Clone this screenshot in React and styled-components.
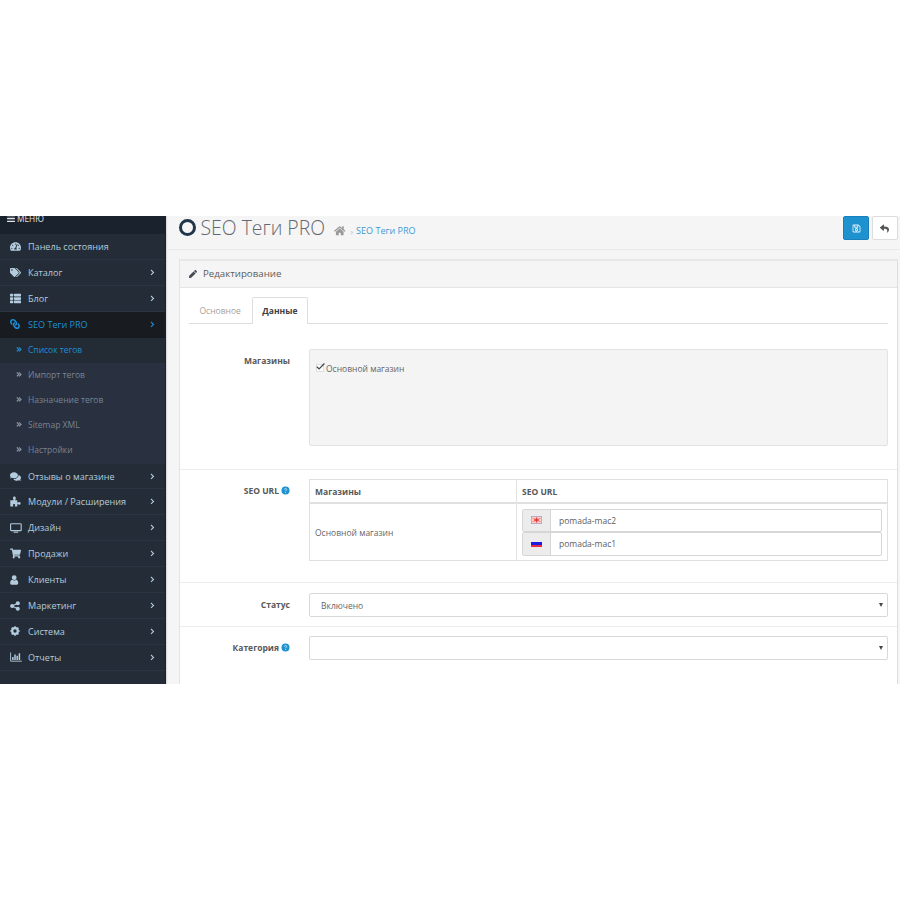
import React, {useState} from 'react';
import styled, {createGlobalStyle, css} from 'styled-components';
import {
    FaTachometerAlt, FaTags, FaThList, FaLink, FaComments, FaShoppingCart,
    FaBars, FaHome, FaPen, FaRegSave, FaReply
} from 'react-icons/fa';

const PuzzleIcon = ()=>(
    <svg width='11' height='11' viewBox='0 0 11 11' fill='currentColor'>
        <path d='M.3 4.300h2.900c.4 0 .4-.4.2-.9C3.100 2.900 3 2.500 3 2 3 1.100 3.600.5 4.400.5S5.800 1.100 5.800 2c0 .5-.2.9-.4 1.400-.2.500-.2.9.3.9h1.600v1.900c0 .4.400.5.8.3.400-.2.7-.4 1.200-.4.8 0 1.300.6 1.300 1.300s-.5 1.300-1.300 1.300c-.5 0-.8-.2-1.200-.4-.4-.2-.8-.1-.8.3v1.900H5.200c-.5 0-.5-.4-.3-.8.2-.3.200-.500.200-.8 0-.6-.4-1-1-1s-1.100.4-1.100 1c0 .3.1.5.3.8.2.4.1.8-.3.8H.3z'/>
    </svg>
)

const TvIcon = ()=>(
    <svg width='12' height='10' viewBox='0 0 12 10' fill='none' stroke='currentColor'>
        <rect x='.6' y='.8' width='10.600' height='6.800' rx='.7' strokeWidth='1.100'/>
        <path d='M3.600 9.200h4.600' strokeWidth='1.100'/>
    </svg>
)

const UserIcon = ()=>(
    <svg width='9' height='10' viewBox='0 0 9 10' fill='currentColor'>
        <circle cx='4.200' cy='2.700' r='2.400'/>
        <path d='M2.100 4.700c1.300 1 2.900 1 4.200 0 1.500.4 1.900 1.900 1.900 3.600 0 .9-.5 1.400-1.400 1.400H1.600C.7 9.700.2 9.200.2 8.300c0-1.700.4-3.200 1.900-3.600z'/>
    </svg>
)

const ShareIcon = ()=>(
    <svg width='10' height='10' viewBox='0 0 10 10' fill='currentColor'>
        <circle cx='2.100' cy='5' r='2'/>
        <circle cx='7.800' cy='2.200' r='2'/>
        <circle cx='7.800' cy='7.800' r='2'/>
        <path d='M7.800 2.200L2.100 5l5.700 2.800' fill='none' stroke='currentColor' strokeWidth='1.200'/>
    </svg>
)

const CogIcon = ()=>(
    <svg width='10' height='10' viewBox='0 0 10 10' fill='none' stroke='currentColor'>
        <circle cx='5' cy='5' r='2.800' strokeWidth='2.200'/>
        <path d='M5 .3v1.400M5 8.300v1.400M.3 5h1.400M8.300 5h1.400M1.700 1.700l1 1M7.300 7.300l1 1M1.700 8.300l1-1M7.300 2.700l1-1' strokeWidth='1.700'/>
    </svg>
)

const ChartIcon = ()=>(
    <svg width='12' height='10' viewBox='0 0 12 10' fill='none' stroke='currentColor'>
        <path d='M.6.5v8.700h11.200' strokeWidth='.9'/>
        <path d='M2.900 8V5M5 8V2.600M7.200 8V3.800M9.400 8V1.300' strokeWidth='1.500'/>
    </svg>
)

const HelpIcon = ()=>(
    <svg width='9' height='9' viewBox='0 0 9 9' fill='none'>
        <circle cx='4.500' cy='4.500' r='4' fill='currentColor'/>
        <path d='M3.300 3.500c.1-1.300 2.400-1.200 2.400.1 0 .8-1.200.8-1.200 1.600M4.500 5.900v.9' stroke='#d9eefa' strokeWidth='.9'/>
    </svg>
)

const Angle = ()=>(
    <svg width='5' height='7' viewBox='0 0 5 7' fill='none' stroke='currentColor' strokeWidth='1.100'>
        <path d='M1 1l2.500 2.400L1 5.800'/>
    </svg>
)

const DoubleAngle = ()=>(
    <svg width='6' height='7' viewBox='0 0 6 7' fill='none' stroke='currentColor' strokeWidth='1.200'>
        <path d='M.8 1.400l2 2-2 2M3 1.400l2 2-2 2'/>
    </svg>
)

const Check = ()=>(
    <svg width='11' height='10' viewBox='0 0 11 10' fill='none' stroke='#4a4a4a' strokeWidth='1.300'>
        <path d='M1.800 4.700l2.300 2.200L9.400 1.500'/>
    </svg>
)

const FlagGeorgia = ()=>(
    <svg width='11' height='8' viewBox='0 0 11 8'>
        <rect width='11' height='8' fill='#a9a3bd'/>
        <rect x='.8' y='.8' width='9.400' height='6.400' fill='#fbdcdc'/>
        <path d='M5.500 1.500v5M2.800 4h5.400' stroke='#f0352f' strokeWidth='1.600'/>
        <path d='M1.500 2.300h2M7.500 2.300h2M1.500 5.700h2M7.500 5.700h2' stroke='#f07a78' strokeWidth='1'/>
    </svg>
)

const FlagRussia = ()=>(
    <svg width='11' height='8' viewBox='0 0 11 8'>
        <rect width='11' height='8' fill='#e9e9ee'/>
        <rect y='2' width='11' height='3' fill='#1c1ce0'/>
        <rect y='5' width='11' height='2' fill='#e82a40'/>
    </svg>
)

const topMenu = [
    {name:'Панель состояния', icon:<FaTachometerAlt/>, flat:true},
    {name:'Каталог', icon:<FaTags/>},
    {name:'Блог', icon:<FaThList/>},
    {name:'SEO Теги PRO', icon:<FaLink/>, active:true},
]
const subMenu = ['Список тегов', 'Импорт тегов', 'Назначение тегов', 'Sitemap XML', 'Настройки']
const bottomMenu = [
    {name:'Отзывы о магазине', icon:<FaComments/>},
    {name:'Модули / Расширения', icon:<PuzzleIcon/>},
    {name:'Дизайн', icon:<TvIcon/>},
    {name:'Продажи', icon:<FaShoppingCart/>},
    {name:'Клиенты', icon:<UserIcon/>},
    {name:'Маркетинг', icon:<ShareIcon/>},
    {name:'Система', icon:<CogIcon/>},
    {name:'Отчеты', icon:<ChartIcon/>},
]

const MenuRow = ({item})=>(
    <MenuItem $active={item.active}>
        <span className='icon'>{item.icon}</span>
        <span className='name'>{item.name}</span>
        {!item.flat && <Angle/>}
    </MenuItem>
)

const Sidebar = ()=>(
    <WrapperSidebar>
        <MenuTitle><FaBars/><span>МЕНЮ</span></MenuTitle>
        {topMenu.map(item => <MenuRow key={item.name} item={item}/>)}
        {subMenu.map((name, i) => (
            <SubItem key={name} $active={i === 0}><DoubleAngle/><span>{name}</span></SubItem>
        ))}
        {bottomMenu.map(item => <MenuRow key={item.name} item={item}/>)}
    </WrapperSidebar>
)

const App = ()=>{
    const [checked, setChecked] = useState(true)

    return(
        <>
        <GlobalStyle/>
        <Screen>
            <Sidebar/>
            <Content>
                <PageHeader>
                    <Ring/>
                    <h1>SEO Теги PRO</h1>
                    <Breadcrumb>
                        <FaHome/><i>›</i><a>SEO Теги PRO</a>
                    </Breadcrumb>
                    <Actions>
                        <Button $primary><FaRegSave/></Button>
                        <Button><FaReply/></Button>
                    </Actions>
                </PageHeader>
                <Panel>
                    <PanelHeading><FaPen/><span>Редактирование</span></PanelHeading>
                    <Tabs>
                        <Tab>Основное</Tab>
                        <Tab $active>Данные</Tab>
                    </Tabs>
                    <FormRow $height={145} $gap={25}>
                        <Label><span>Магазины</span></Label>
                        <Well>
                            <CheckLine onClick={()=>setChecked(!checked)}>
                                <CheckBox>{checked && <Check/>}</CheckBox>
                                <span>Основной магазин</span>
                            </CheckLine>
                        </Well>
                    </FormRow>
                    <FormRow $height={113} $gap={9} $line>
                        <Label><span>SEO URL</span><HelpIcon/></Label>
                        <Table>
                            <Th>Магазины</Th>
                            <Th>SEO URL</Th>
                            <Td>Основной магазин</Td>
                            <Td>
                                <InputGroup><div><FlagGeorgia/></div><p>pomada-mac2</p></InputGroup>
                                <InputGroup><div><FlagRussia/></div><p>pomada-mac1</p></InputGroup>
                            </Td>
                        </Table>
                    </FormRow>
                    <FormRow $height={44} $gap={10} $line>
                        <Label><span>Статус</span></Label>
                        <Select><span>Включено</span><Caret/></Select>
                    </FormRow>
                    <FormRow $height={80} $gap={9} $line>
                        <Label><span>Категория</span><HelpIcon/></Label>
                        <Select><span/><Caret/></Select>
                    </FormRow>
                </Panel>
            </Content>
        </Screen>
        </>
    )
}

const GlobalStyle = createGlobalStyle`
   *{ box-sizing: border-box; }
   body{
       margin: 0;
       background: #fff;
       font-family: 'Open Sans', sans-serif;
       font-size: 8.5px;
       color: #666;
   }
   p, h1{ margin: 0; }
   svg{ display: block; flex: none; }
`;

const Screen = styled.div`
   display: flex;
   width: 900px;
   height: 468px;
   margin-top: 216px;
   overflow: hidden;
   background: #f5f5f5;
`;

const WrapperSidebar = styled.div`
   width: 166px;
   flex: none;
   background: #242d37;
   border-right: 1px solid #1b222b;
   box-shadow: 1px 0 1px #dcdcdc;
`;

const MenuTitle = styled.div`
   display: flex;
   height: 18px;
   padding-left: 7px;
   background: #1a222d;
   color: #e2e6ea;
   font-size: 8.3px;
   line-height: 8px;
   svg{
       width: 8px;
       height: 9px;
       margin: -2px 2px 0 0;
   }
   span{ margin-top: -1px; }
`;

const MenuItem = styled.div`
   display: flex;
   align-items: center;
   height: 25.920px;
   padding: 0 10px;
   border-bottom: 1px solid #2a3541;
   color: #b3cbdd;
   font-size: 9.070px;
   .icon{
       width: 18px;
       svg{ font-size: 11px; }
   }
   .name{
       flex: 1;
       white-space: nowrap;
   }
   ${props => props.$active && css`
      background: #181b20;
      border-color: #15181c;
      color: #1d8fd6;
      .icon svg{
          font-size: 10px;
          transform: scaleX(-1);
      }
   `}
`;

const SubItem = styled.div`
   display: flex;
   align-items: center;
   height: 25.2px;
   padding: 0 0 2px 16px;
   background: ${props => props.$active ? '#232b34' : '#293040'};
   color: ${props => props.$active ? '#1d8fd6' : '#788493'};
   span{ margin-left: 6px; }
   svg{ color: ${props => props.$active ? '#1d8fd6' : '#8996a5'}; }
`;

const Content = styled.div`
   flex: 1;
   min-width: 0;
`;

const PageHeader = styled.div`
   display: flex;
   height: 34px;
   padding-left: 12.500px;
   border-bottom: 1px solid #e9e9e9;
   h1{
       margin: -2px 0 0 5px;
       color: #646872;
       font-size: 19.400px;
       font-weight: 300;
       line-height: 27px;
       white-space: nowrap;
   }
`;

const Ring = styled.div`
   width: 17px;
   height: 17px;
   margin-top: 3px;
   border: 3px solid #20364a;
   border-radius: 50%;
`;

const Breadcrumb = styled.div`
   display: flex;
   align-items: center;
   height: 14px;
   margin: 8px 0 0 9px;
   white-space: nowrap;
   svg{
       margin-top: -1px;
       font-size: 11.500px;
       color: #999;
   }
   i{
       margin: 0 3px 0 5px;
       color: #bbb;
       font-style: normal;
   }
   a{
       margin-top: -1px;
       color: #3d99d6;
       font-size: 9.050px;
   }
`;

const Actions = styled.div`
   display: flex;
   gap: 2px;
   margin: 0 2.500px 0 auto;
`;

const Button = styled.button`
   display: flex;
   align-items: center;
   justify-content: center;
   width: 26px;
   height: 24px;
   padding: 0;
   border: 1px solid ${props => props.$primary ? '#1a7fbd' : '#dcdcdc'};
   border-radius: 2px;
   background: ${props => props.$primary ? '#1e91cf' : '#fff'};
   color: ${props => props.$primary ? '#e4f3fc' : '#555'};
   font-size: 9px;
   &:first-child{ margin-right: .5px; }
`;

const Panel = styled.div`
   width: 719px;
   height: 440px;
   margin: 9px 0 0 13px;
   border: 1px solid #e4e4e4;
   border-top: 2px solid #e7e7e7;
   border-right: 1px solid #dedede;
   background: #fff;
`;

const PanelHeading = styled.div`
   display: flex;
   align-items: center;
   height: 27px;
   padding: 0 0 1px 9px;
   border-bottom: 1px solid #e4e4e4;
   background: #f5f5f5;
   color: #5c5c5c;
   font-size: 9.700px;
   svg{
       margin-right: 6px;
       font-size: 8px;
       color: #444a56;
   }
`;

const Tabs = styled.div`
   display: flex;
   align-items: flex-end;
   height: 36px;
   margin: 0 9px;
   border-bottom: 1px solid #dedede;
`;

const Tab = styled.div`
   height: 25px;
   padding: 0 11px 0 10.500px;
   line-height: 26px;
   color: #a2a2a2;
   ${props => props.$active && css`
      height: 27px;
      margin-bottom: -1px;
      padding: 0 9.500px;
      border: 1px solid #dedede;
      border-bottom: none;
      border-radius: 2px 2px 0 0;
      background: #fff;
      color: #3f3f3f;
      font-weight: 700;
   `}
`;

const FormRow = styled.div`
   display: grid;
   grid-template-columns: 110px 579px;
   column-gap: 19px;
   height: ${props => props.$height}px;
   padding-top: ${props => props.$gap}px;
   border-top: ${props => props.$line ? '1px solid #ededed' : 'none'};
`;

const Label = styled.div`
   display: flex;
   align-items: center;
   justify-content: flex-end;
   height: 12px;
   margin-top: 5.500px;
   color: #585858;
   font-weight: 700;
   white-space: nowrap;
   svg{
       margin-left: 2px;
       color: #1e91cf;
   }
`;

const Well = styled.div`
   height: 97px;
   padding: 13px 6px;
   border: 1px solid #e3e3e3;
   border-radius: 2px;
   background: #f4f4f4;
`;

const CheckLine = styled.div`
   display: flex;
   align-items: center;
   height: 11px;
`;

const CheckBox = styled.div`
   flex: none;
   width: 8px;
   height: 8px;
   margin: -1px 2px 0 0;
   border: 1px solid #ddd;
   background: #fff;
   svg{ margin: -3px 0 0 -2px; }
`;

const Table = styled.div`
   display: grid;
   grid-template-columns: 207px 1fr;
   grid-template-rows: 24px 1fr;
   height: 82px;
   border: 1px solid #e0e0e0;
`;

const Th = styled.div`
   padding-left: 5px;
   border-right: 1px solid #e2e2e2;
   border-bottom: 2px solid #e0e0e0;
   line-height: 23px;
   font-weight: 700;
   color: #585858;
   &:nth-child(2){ border-right: none; }
`;

const Td = styled.div`
   display: flex;
   flex-direction: column;
   justify-content: center;
   padding: 0 5px;
   border-right: 1px solid #e2e2e2;
   &:last-child{ border-right: none; }
`;

const InputGroup = styled.div`
   display: flex;
   height: 23.500px;
   border: 1px solid #d6d6d6;
   border-radius: 2px;
   div{
       display: flex;
       align-items: center;
       justify-content: center;
       width: 28px;
       border-right: 1px solid #d6d6d6;
       background: #ececec;
   }
   p{
       padding-left: 8px;
       line-height: 22px;
       color: #606060;
   }
`;

const Select = styled.div`
   display: flex;
   align-items: center;
   justify-content: space-between;
   height: 24px;
   padding: 0 4px 0 11px;
   border: 1px solid #d8d8d8;
   border-radius: 2px;
   color: #666;
`;

const Caret = styled.div`
   border: 2px solid transparent;
   border-top: 4px solid #444;
   border-bottom: none;
`;

export default App;
